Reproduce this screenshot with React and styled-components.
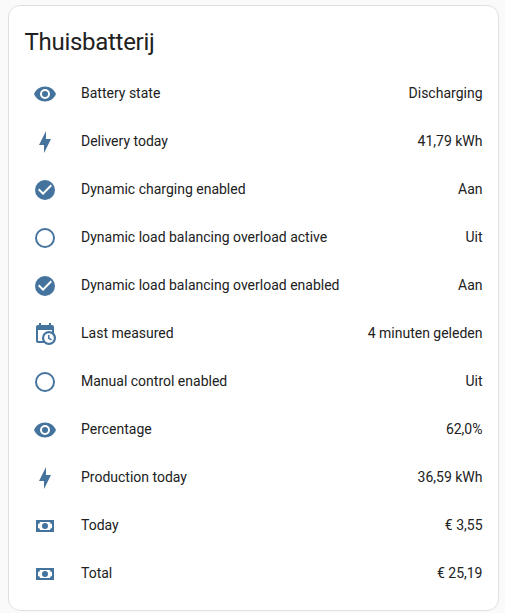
import React from "react";
import styled, { createGlobalStyle } from "styled-components";

const Global = createGlobalStyle`
  html, body { margin: 0; padding: 0; background: #fafafa; }
  body { font-family: Roboto, "Liberation Sans", sans-serif; }
`;

const Page = styled.div`
  width: 505px;
  height: 613px;
  box-sizing: border-box;
  padding: 5px 6px 0 8px;
  overflow: hidden;
`;

const Card = styled.section`
  box-sizing: border-box;
  width: 491px;
  height: 606px;
  background: #fff;
  border: 1px solid #e0e0e0;
  border-radius: 12px;
`;

const Title = styled.h1`
  margin: 0;
  padding: 20px 16px 15px 15.5px;
  font-size: 24px;
  line-height: 32px;
  font-weight: 400;
  letter-spacing: -0.288px;
  color: #212121;
`;

const List = styled.div`
  display: flex;
  flex-direction: column;
  gap: 8px;
  padding: 0 15.5px 0 16px;
`;

const Row = styled.div`
  display: flex;
  align-items: center;
  height: 40px;
  font-size: 14px;
  line-height: 20px;
  color: #212121;
`;

const IconBox = styled.svg`
  width: 24px;
  height: 24px;
  margin: 2px 24px 0 8px;
  flex: none;
  fill: #44739e;
`;

const Name = styled.span`
  flex: 1;
  white-space: nowrap;
`;

const Value = styled.span`
  white-space: nowrap;
`;

const paths = {
  eye: "M12,9A3,3 0 0,0 9,12A3,3 0 0,0 12,15A3,3 0 0,0 15,12A3,3 0 0,0 12,9M12,17A5,5 0 0,1 7,12A5,5 0 0,1 12,7A5,5 0 0,1 17,12A5,5 0 0,1 12,17M12,4.5C7,4.5 2.73,7.61 1,12C2.73,16.39 7,19.5 12,19.5C17,19.5 21.27,16.39 23,12C21.27,7.61 17,4.5 12,4.5Z",
  bolt: "M11 15H6L13 1V9H18L11 23V15Z",
  on: "M10,17L5,12L6.41,10.58L10,14.17L17.59,6.58L19,8M12,2A10,10 0 0,0 2,12A10,10 0 0,0 12,22A10,10 0 0,0 22,12A10,10 0 0,0 12,2Z",
  off: "M12,20A8,8 0 0,1 4,12A8,8 0 0,1 12,4A8,8 0 0,1 20,12A8,8 0 0,1 12,20M12,2A10,10 0 0,0 2,12A10,10 0 0,0 12,22A10,10 0 0,0 22,12A10,10 0 0,0 12,2Z",
  clock: "M15,13H16.5V15.82L18.94,17.23L18.19,18.53L15,16.69V13M19,8H5V19H9.67C9.24,18.09 9,17.07 9,16A7,7 0 0,1 16,9C17.07,9 18.09,9.24 19,9.67V8M5,21C3.89,21 3,20.1 3,19V5C3,3.89 3.89,3 5,3H6V1H8V3H16V1H18V3H19A2,2 0 0,1 21,5V11.1C22.24,12.36 23,14.09 23,16A7,7 0 0,1 16,23C14.09,23 12.36,22.24 11.1,21H5M16,11.15A4.85,4.85 0 0,0 11.15,16C11.15,18.68 13.32,20.85 16,20.85A4.85,4.85 0 0,0 20.85,16C20.85,13.32 18.68,11.15 16,11.15Z",
  cash: "M3,6H21V18H3V6M12,9A3,3 0 0,1 15,12A3,3 0 0,1 12,15A3,3 0 0,1 9,12A3,3 0 0,1 12,9M7,8A2,2 0 0,1 5,10V14A2,2 0 0,1 7,16H17A2,2 0 0,1 19,14V10A2,2 0 0,1 17,8H7Z",
};

const rows = [
  ["eye", "Battery state", "Discharging"],
  ["bolt", "Delivery today", "41,79 kWh"],
  ["on", "Dynamic charging enabled", "Aan"],
  ["off", "Dynamic load balancing overload active", "Uit"],
  ["on", "Dynamic load balancing overload enabled", "Aan"],
  ["clock", "Last measured", "4 minuten geleden"],
  ["off", "Manual control enabled", "Uit"],
  ["eye", "Percentage", "62,0%"],
  ["bolt", "Production today", "36,59 kWh"],
  ["cash", "Today", "€ 3,55"],
  ["cash", "Total", "€ 25,19"],
];

export default function App() {
  return (
    <Page>
      <Global />
      <Card>
        <Title>Thuisbatterij</Title>
        <List>
          {rows.map(([icon, name, value]) => (
            <Row key={name}>
              <IconBox viewBox="0 0 24 24"><path d={paths[icon]} /></IconBox>
              <Name>{name}</Name>
              <Value>{value}</Value>
            </Row>
          ))}
        </List>
      </Card>
    </Page>
  );
}
